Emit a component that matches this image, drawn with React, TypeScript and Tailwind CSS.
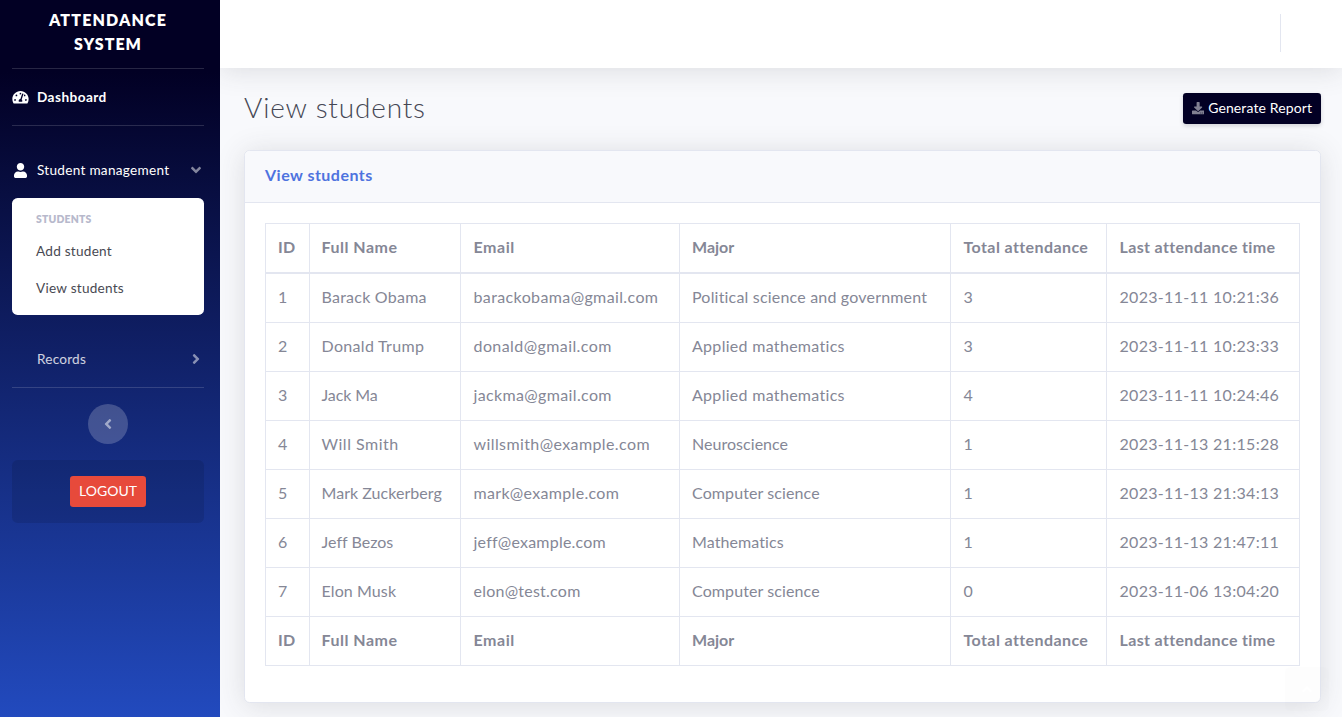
import { FaAngleDown, FaAngleLeft, FaAngleRight, FaAngleUp, FaDownload, FaTachometerAlt, FaUser } from "react-icons/fa";

type Cell = [text: string, tracking: string];

const columns: Cell[] = [
  ["ID", "tracking-[0.2px]"],
  ["Full Name", "tracking-[0.5px]"],
  ["Email", "tracking-[0.55px]"],
  ["Major", "tracking-normal"],
  ["Total attendance", "tracking-[0.4px]"],
  ["Last attendance time", "tracking-[0.35px]"],
];

const DATE = "tracking-[0.3px]";

const students: Cell[][] = [
  [["1", ""], ["Barack Obama", "tracking-[0.24px]"], ["barackobama@gmail.com", "tracking-[0.38px]"], ["Political science and government", "tracking-[0.19px]"], ["3", ""], ["2023-11-11 10:21:36", DATE]],
  [["2", ""], ["Donald Trump", "tracking-[0.32px]"], ["donald@gmail.com", "tracking-[0.42px]"], ["Applied mathematics", "tracking-[0.3px]"], ["3", ""], ["2023-11-11 10:23:33", DATE]],
  [["3", ""], ["Jack Ma", "tracking-[-0.1px]"], ["jackma@gmail.com", "tracking-[0.36px]"], ["Applied mathematics", "tracking-[0.3px]"], ["4", ""], ["2023-11-11 10:24:46", DATE]],
  [["4", ""], ["Will Smith", "tracking-[0.5px]"], ["willsmith@example.com", "tracking-[0.4px]"], ["Neuroscience", "tracking-[0.04px]"], ["1", ""], ["2023-11-13 21:15:28", DATE]],
  [["5", ""], ["Mark Zuckerberg", "tracking-[0.04px]"], ["mark@example.com", "tracking-[0.32px]"], ["Computer science", "tracking-[0.1px]"], ["1", ""], ["2023-11-13 21:34:13", DATE]],
  [["6", ""], ["Jeff Bezos", "tracking-[0.02px]"], ["jeff@example.com", "tracking-[0.22px]"], ["Mathematics", "tracking-[0.1px]"], ["1", ""], ["2023-11-13 21:47:11", DATE]],
  [["7", ""], ["Elon Musk", "tracking-[0.1px]"], ["elon@test.com", "tracking-[0.24px]"], ["Computer science", "tracking-[0.1px]"], ["0", ""], ["2023-11-06 13:04:20", DATE]],
];

// Left padding for each column, in order.
const indents = ["pl-3", "pl-[11.5px]", "pl-[12.5px]", "pl-3", "pl-[12.5px]", "pl-[12.5px]"];

function HeadingCells() {
  return (
    <>
      {columns.map(([text, tracking], i) => (
        <th
          key={text}
          className={`border-r border-b border-[#e3e6f0] pt-0 pr-0 pb-[2px] text-left font-bold whitespace-nowrap [thead_&]:border-b-2 ${indents[i]} ${tracking}`}
        >
          {text}
        </th>
      ))}
    </>
  );
}

function Sidebar() {
  return (
    <aside className="flex w-[220px] shrink-0 flex-col bg-[linear-gradient(180deg,#020024_10%,#224abe_100%)] pr-4 pl-3 text-[13.6px] text-white">
      <div className="flex h-[68px] flex-col items-center pt-2 text-center text-base leading-6 font-extrabold">
        <span className="tracking-[1.15px]">ATTENDANCE</span>
        <span className="tracking-[1px]">SYSTEM</span>
      </div>
      <hr className="border-white/15" />
      <a className="flex h-14 items-center font-bold">
        <FaTachometerAlt className="h-[14.5px] w-[17px]" />
        <span className="ml-2 tracking-[0.45px]">Dashboard</span>
      </a>
      <hr className="border-white/15" />
      <a className="mt-[17px] flex h-[55px] items-center">
        <FaUser className="mb-px ml-[2px] h-[15px] w-[13px]" />
        <span className="ml-[10px] tracking-[0.28px]">Student management</span>
        <FaAngleDown className="mb-px ml-auto size-4 text-white/50" />
      </a>
      <div className="h-[117px] rounded-[5.6px] bg-white pt-3 pl-6 text-[#484952]">
        <h6 className="h-[18px] text-[10.4px] leading-[18px] font-extrabold tracking-[0.2px] text-[#b7b9cc]">STUDENTS</h6>
        <a className="block h-[37px] pt-[13px] leading-5 tracking-[0.24px]">Add student</a>
        <a className="block h-[37px] pt-[13px] leading-5 tracking-[0.24px]">View students</a>
      </div>
      <a className="mt-[17px] flex h-[55px] items-center text-white/80">
        <span className="ml-[25px] tracking-[0.22px]">Records</span>
        <FaAngleRight className="mb-px ml-auto size-4 text-white/50" />
      </a>
      <hr className="border-white/15" />
      <button className="mt-4 flex size-10 items-center justify-center self-center rounded-full bg-white/20 text-white/50">
        <FaAngleLeft className="size-4" />
      </button>
      <div className="mt-4 flex h-[63px] items-center justify-center rounded-[5.6px] bg-black/10">
        <button className="h-[31px] w-[76px] rounded-[3.2px] bg-[#e74a3b] pb-px text-sm">LOGOUT</button>
      </div>
    </aside>
  );
}

export default function App() {
  return (
    <div className="relative flex h-[717px] w-[1342px] overflow-hidden bg-[#f8f9fc] font-['Lato',sans-serif]">
      <Sidebar />
      <main className="flex min-w-0 flex-1 flex-col overflow-hidden">
        <header className="flex h-[68px] shrink-0 justify-end bg-white pt-[14px] pr-[61px] shadow-[0_2.4px_28px_rgba(58,59,69,0.15)]">
          <div className="h-[38px] border-r border-[#e3e6f0]" />
        </header>
        <div className="flex flex-col pr-[21px] pl-6">
          <div className="mt-6 flex h-8 items-center justify-between">
            <h1 className="pb-[3px] text-[28px] leading-8 font-light tracking-[0.82px] text-[#454754]">View students</h1>
            <button className="mt-[1px] flex h-[31px] w-[138px] items-center justify-center gap-1 rounded-[3.2px] bg-[#020024] text-sm text-white shadow-[0_2px_4px_rgba(58,59,69,0.2)]">
              <FaDownload className="size-[12.25px] text-white/50" />
              <span className="pb-px tracking-[0.12px]">Generate Report</span>
            </button>
          </div>
          <section className="mt-[26px] h-[553px] rounded-[5.6px] border border-[#e3e6f0] bg-white shadow-[0_2.4px_28px_rgba(58,59,69,0.15)]">
            <div className="flex h-[52px] items-center rounded-t-[5px] border-b border-[#e3e6f0] bg-[#f8f9fc] pb-[3px] pl-5">
              <h6 className="text-base font-bold tracking-[0.48px] text-[#4e73df]">View students</h6>
            </div>
            <table className="mt-5 ml-5 w-[1035px] table-fixed border-separate border-spacing-0 border-t border-l border-[#e3e6f0] text-base leading-6 text-[#858796]">
              <colgroup>
                <col className="w-[44px]" />
                <col className="w-[151px]" />
                <col className="w-[219px]" />
                <col className="w-[271px]" />
                <col className="w-[156px]" />
                <col className="w-[193px]" />
              </colgroup>
              <thead>
                <tr className="h-[50px]">
                  <HeadingCells />
                </tr>
              </thead>
              <tbody>
                {students.map((row) => (
                  <tr key={row[0][0]} className="h-[49px]">
                    {row.map(([text, tracking], i) => (
                      <td
                        key={i}
                        className={`border-r border-b border-[#e3e6f0] pt-0 pr-0 pb-[2px] whitespace-nowrap ${indents[i]} ${tracking}`}
                      >
                        {text}
                      </td>
                    ))}
                  </tr>
                ))}
              </tbody>
              <tfoot>
                <tr className="h-[49px]">
                  <HeadingCells />
                </tr>
              </tfoot>
            </table>
          </section>
        </div>
      </main>
      <button className="absolute right-[13px] bottom-[6px] flex size-11 items-center justify-center rounded-[5.6px] bg-[#5a5c69]/50 text-white opacity-[0.01]">
        <FaAngleUp className="size-4" />
      </button>
    </div>
  );
}
